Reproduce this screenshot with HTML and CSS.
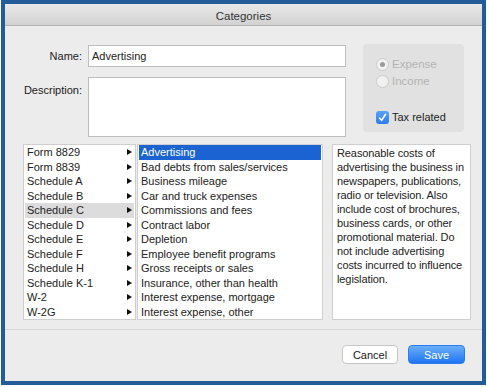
FILE: index.html
```html
<!DOCTYPE html>
<html lang="en">
<head>
    <meta charset="UTF-8">
    <title>Categories</title>
    <link rel="stylesheet" href="styles.css">
</head>
<body>
    <div class="window">
        <div class="titlebar">Categories</div>

        <div class="content">
            <div class="top">
                <div class="fields">
                    <label class="field-label">Name:</label>
                    <input class="text-input" type="text" value="Advertising">
                    <label class="field-label desc-label">Description:</label>
                    <textarea class="text-area"></textarea>
                </div>

                <div class="type-box">
                    <div class="option disabled"><span class="radio checked"></span>Expense</div>
                    <div class="option disabled"><span class="radio"></span>Income</div>
                    <div class="option tax">
                        <span class="checkbox">
                            <svg width="9" height="9" viewBox="0 0 9 9"><path d="M1.5 5 L3.6 7.3 L7.6 1.3" fill="none" stroke="#fff" stroke-width="1.6" stroke-linecap="round" stroke-linejoin="round"/></svg>
                        </span>
                        Tax related
                    </div>
                </div>
            </div>

            <div class="lists">
                <ul class="list forms">
                    <li>Form 8829<span class="arrow"></span></li>
                    <li>Form 8839<span class="arrow"></span></li>
                    <li>Schedule A<span class="arrow"></span></li>
                    <li>Schedule B<span class="arrow"></span></li>
                    <li class="current">Schedule C<span class="arrow"></span></li>
                    <li>Schedule D<span class="arrow"></span></li>
                    <li>Schedule E<span class="arrow"></span></li>
                    <li>Schedule F<span class="arrow"></span></li>
                    <li>Schedule H<span class="arrow"></span></li>
                    <li>Schedule K-1<span class="arrow"></span></li>
                    <li>W-2<span class="arrow"></span></li>
                    <li>W-2G<span class="arrow"></span></li>
                </ul>
                <ul class="list lines">
                    <li class="selected">Advertising</li>
                    <li>Bad debts from sales/services</li>
                    <li>Business mileage</li>
                    <li>Car and truck expenses</li>
                    <li>Commissions and fees</li>
                    <li>Contract labor</li>
                    <li>Depletion</li>
                    <li>Employee benefit programs</li>
                    <li>Gross receipts or sales</li>
                    <li>Insurance, other than health</li>
                    <li>Interest expense, mortgage</li>
                    <li>Interest expense, other</li>
                </ul>
                <div class="help">Reasonable costs of advertising the business in newspapers, publications, radio or television. Also include cost of brochures, business cards, or other promotional material. Do not include advertising costs incurred to influence legislation.</div>
            </div>
        </div>

        <div class="footer">
            <button class="button">Cancel</button>
            <button class="button primary">Save</button>
        </div>
    </div>
</body>
</html>
```

FILE: styles.css
```css
body {
    margin: 0;
    padding: 0 1px;
    background-color: #ffffff;
    font-family: "Liberation Sans", Arial, sans-serif;
    font-size: 11px;
    color: #222222;
}
.window {
    width: 485px;
    height: 385px;
    box-sizing: border-box;
    border: 4px solid #235c98;
    background-color: #ececec;
    display: flex;
    flex-direction: column;
}
.titlebar {
    height: 22px;
    padding-top: 3px;
    box-sizing: border-box;
    line-height: 19px;
    text-align: center;
    color: #333333;
    font-size: 11.5px;
    background: linear-gradient(#e9e9e9, #d2d2d2);
    border-bottom: 1px solid #b3b3b3;
}
.content {
    padding: 19px 11px 0 18px;
    flex: 1;
}
.top {
    display: flex;
    align-items: flex-start;
}
.fields {
    display: grid;
    grid-template-columns: 59px 258px;
    column-gap: 6px;
    row-gap: 10px;
}
.field-label {
    text-align: right;
    line-height: 22px;
    white-space: nowrap;
}
.desc-label {
    line-height: 14px;
    padding-top: 6px;
}
.text-input,
.text-area {
    box-sizing: border-box;
    margin: 0;
    border: 1px solid #bdbdbd;
    background-color: #ffffff;
    font-family: inherit;
    font-size: 11px;
    color: #222222;
    outline: none;
}
.text-input {
    height: 22px;
    padding: 0 3px;
}
.text-area {
    height: 60px;
    resize: none;
}
.type-box {
    width: 101px;
    height: 88px;
    box-sizing: border-box;
    margin: -1px 0 0 17px;
    padding: 13px 0 0 13px;
    background-color: #e1e1e1;
    border-radius: 4px;
}
.option {
    display: flex;
    align-items: center;
    gap: 3px;
    height: 14px;
    margin-bottom: 3px;
    font-size: 11.5px;
}
.option.disabled {
    color: #b4b4b4;
}
.option.tax {
    margin-top: 22px;
    color: #222222;
    font-size: 11px;
}
.radio {
    width: 13px;
    height: 13px;
    box-sizing: border-box;
    border: 1px solid #cbcbcb;
    border-radius: 50%;
    background-color: #f1f1f1;
    display: flex;
    align-items: center;
    justify-content: center;
}
.radio.checked::after {
    content: "";
    width: 5px;
    height: 5px;
    border-radius: 50%;
    background-color: #9a9a9a;
}
.checkbox {
    width: 13px;
    height: 13px;
    border-radius: 3px;
    background: linear-gradient(#5aa2f8, #2a7cf1);
    display: flex;
    align-items: center;
    justify-content: center;
}
.lists {
    display: flex;
    margin-top: 7px;
    height: 176px;
}
.list {
    margin: 0;
    padding: 0 1px;
    list-style: none;
    box-sizing: border-box;
    height: 176px;
    border: 1px solid #cfcfcf;
    background-color: #ffffff;
    overflow: hidden;
}
.list li {
    height: 14.5px;
    line-height: 14.5px;
    padding-left: 2px;
    white-space: nowrap;
}
.forms {
    width: 113px;
}
.forms li {
    display: flex;
    align-items: center;
    justify-content: space-between;
    padding-right: 2px;
}
.forms li.current {
    background-color: #dcdcdc;
}
.arrow {
    width: 0;
    height: 0;
    border-left: 5px solid #111111;
    border-top: 3.5px solid transparent;
    border-bottom: 3.5px solid transparent;
}
.lines {
    width: 186px;
    margin-left: 1px;
    padding-right: 1px;
}
.lines li.selected {
    background-color: #1b63d3;
    color: #ffffff;
}
.help {
    width: 139px;
    height: 176px;
    box-sizing: border-box;
    margin-left: 9px;
    padding: 1px 1px 1px 4px;
    border: 1px solid #cfcfcf;
    background-color: #ffffff;
    line-height: 14px;
    letter-spacing: -0.1px;
}
.footer {
    border-top: 1px solid #d7d7d7;
    margin-top: 8px;
    height: 52px;
    box-sizing: border-box;
    padding: 15px 17px 0 0;
    display: flex;
    justify-content: flex-end;
    align-items: flex-start;
    gap: 10px;
}
.button {
    height: 19px;
    box-sizing: border-box;
    border-radius: 4px;
    font-family: inherit;
    font-size: 11px;
    padding: 0;
}
.button:first-child {
    width: 56px;
    border: 1px solid #c6c6c6;
    background-color: #ffffff;
    color: #222222;
}
.button.primary {
    width: 57px;
    border: 1px solid #2a7df0;
    background: linear-gradient(#6aaefa, #1f74f1);
    color: #ffffff;
}
```
